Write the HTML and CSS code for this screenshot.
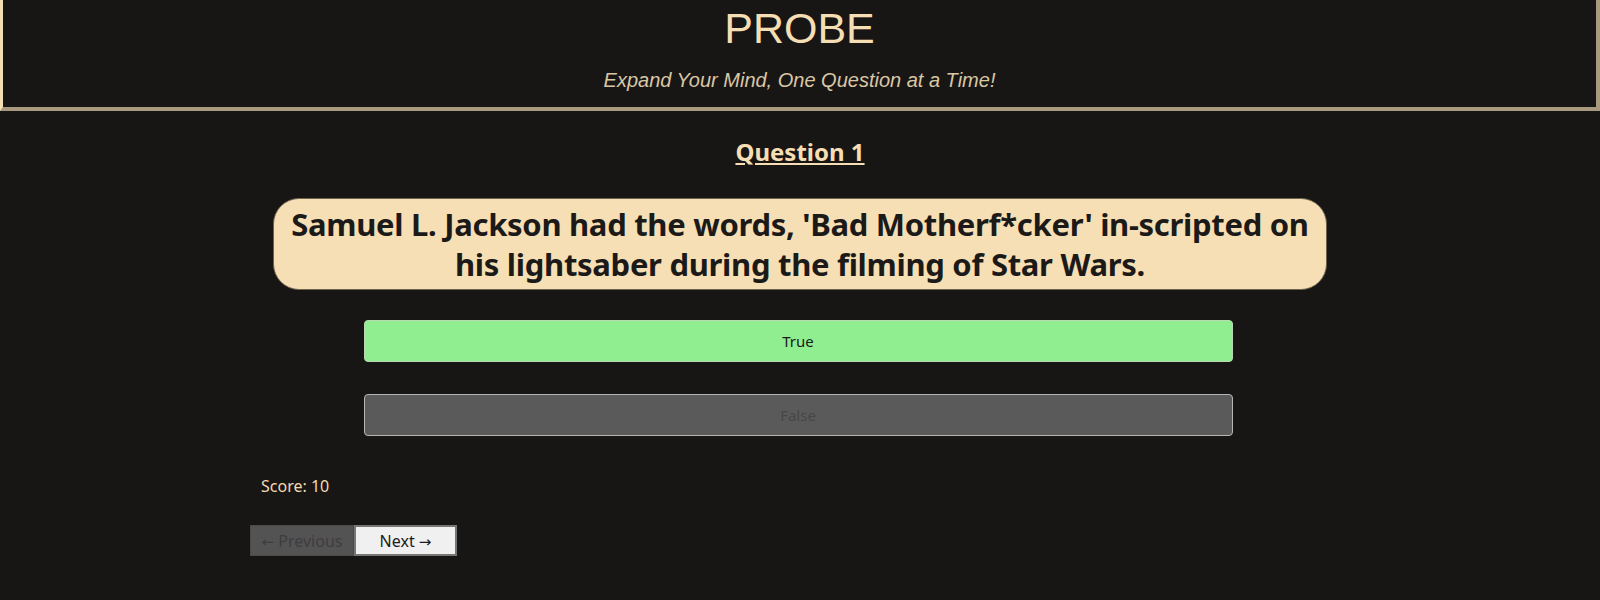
FILE: index.html
```html
<!DOCTYPE html>
<html lang="en">
<head>
<meta charset="utf-8">
<title>PROBE</title>
<link rel="stylesheet" href="styles.css">
</head>
<body>
<header class="site-header">
  <h1 class="brand">PROBE</h1>
  <p class="tagline">Expand Your Mind, One Question at a Time!</p>
</header>
<main class="quiz">
  <h2 class="question-number">Question 1</h2>
  <div class="question-box">Samuel L. Jackson had the words, 'Bad Motherf*cker' in-scripted on his lightsaber during the filming of Star Wars.</div>
  <div class="answers">
    <button class="answer answer-correct">True</button>
    <button class="answer answer-disabled">False</button>
  </div>
  <p class="score">Score: 10</p>
  <div class="nav">
    <button class="nav-btn nav-prev"><span class="arrow">←</span> Previous</button>
    <button class="nav-btn nav-next">Next <span class="arrow">→</span></button>
  </div>
</main>
</body>
</html>
```
FILE: styles.css
```css
html, body {
  margin: 0;
  padding: 0;
}
body {
  background: #181614;
  font-family: "Noto Sans", "Open Sans", sans-serif;
  color: #f5deb3;
}
.site-header {
  border-style: solid;
  border-width: 0 4px 4px 3px;
  border-color: #a89a7e #a89a7e #a89a7e #f5deb3;
  text-align: center;
  padding: 3px 0 15px;
}
.brand {
  margin: 0;
  font-family: "Liberation Sans", Arial, sans-serif;
  font-weight: normal;
  font-size: 43px;
  line-height: 50px;
  color: #f5deb3;
}
.tagline {
  margin: 15px 0 0;
  font-family: "Liberation Sans", Arial, sans-serif;
  font-style: italic;
  font-size: 20px;
  line-height: 24px;
  color: #d9c7a5;
}
.quiz {
  width: 1100px;
  margin: 0 auto;
  display: flex;
  flex-direction: column;
  align-items: center;
}
.question-number {
  margin: 25px 0 0;
  font-size: 24px;
  line-height: 32px;
  font-weight: 700;
  text-decoration: underline;
  color: #f5deb3;
}
.question-box {
  box-sizing: border-box;
  width: 1054px;
  margin-top: 30px;
  padding: 5px 10px;
  background: #f6dfb4;
  border: 1px solid #6f6350;
  border-radius: 26px;
  color: #1c1a18;
  font-size: 31px;
  font-weight: 700;
  letter-spacing: -0.3px;
  line-height: 40px;
  text-align: center;
}
.answers {
  margin-top: 30px;
  margin-right: 4px;
  display: flex;
  flex-direction: column;
  gap: 32px;
}
.answer {
  box-sizing: border-box;
  width: 869px;
  height: 42px;
  border-radius: 4px;
  font-family: "Noto Sans", "Open Sans", sans-serif;
  font-size: 15px;
  cursor: pointer;
}
.answer-correct {
  background: #90ee90;
  border: 1px solid #b9d9b4;
  color: #1b1b1b;
}
.answer-disabled {
  background: #5b5a5b;
  border: 1px solid #b5b5b5;
  color: #474647;
}
.score {
  align-self: flex-start;
  margin: 40px 0 0 11px;
  font-size: 16px;
  line-height: 20px;
  color: #f2d9b0;
}
.nav {
  align-self: flex-start;
  margin-top: 29px;
  display: flex;
}
.nav-btn {
  box-sizing: border-box;
  width: 104px;
  height: 31px;
  font-family: "Noto Sans", "Open Sans", sans-serif;
  font-size: 16px;
  padding: 0;
}
.arrow {
  font-family: "DejaVu Sans", sans-serif;
  font-size: 15px;
}
.nav-prev {
  background: #545354;
  border: 1px solid #4a494a;
  color: #3e3d3e;
}
.nav-next {
  width: 103px;
  background: #f0f0f0;
  border: 2px solid #767676;
  color: #1b1b1b;
}
```
